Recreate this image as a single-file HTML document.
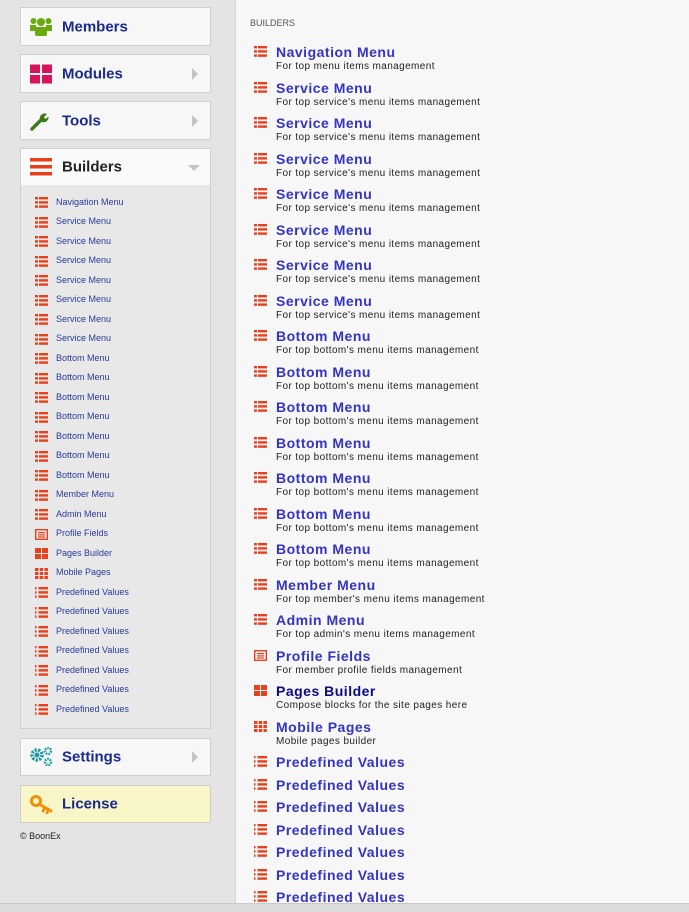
<!DOCTYPE html>
<html><head><meta charset="utf-8"><style>
*{margin:0;padding:0;box-sizing:border-box}
body{width:689px;height:912px;overflow:hidden;background:#e4e4e4;font-family:"Liberation Sans",Arial,sans-serif;position:relative}
.box{position:absolute;left:20px;width:191px;background:#f7f7f7;border:1px solid #cfcfcf}
.box .t{position:absolute;left:41px;top:50%;transform:translateY(-50%);font-size:15px;font-weight:bold;color:#1a2a8e}
.box .ic{position:absolute;left:9px;top:50%;transform:translateY(-50%)}
.arr{position:absolute;right:12px;top:50%;margin-top:-6px;width:0;height:0;border-left:6px solid #c4c4c4;border-top:6px solid transparent;border-bottom:6px solid transparent}
.sub{position:absolute;left:20px;top:185px;width:191px;height:544px;border:1px solid #cfcfcf;border-top:none;background:#e8e8e8}
.sl{position:absolute;left:35px;top:192.5px}
.sl div{height:19.5px;line-height:19.5px;font-size:9px;color:#2a3a9a;position:relative;padding-left:21px}
.sl svg{position:absolute;left:0;top:4.5px}
.main{position:absolute;left:235px;top:0;width:454px;height:903px;background:#f7f7f7;border-left:1px solid #d8d8d8}
.hd{position:absolute;left:250px;top:18px;font-size:9px;color:#555}
.rl{position:absolute;left:254px;top:44px}
.rl .r{height:35.5px;position:relative;padding-left:22px}
.rl .p{height:22.5px;position:relative;padding-left:22px}
.rl b{display:block;font-size:14px;line-height:16px;color:#3434c4;letter-spacing:0.5px}
.rl i{display:block;font-style:normal;font-size:10px;line-height:14px;color:#222;letter-spacing:0.4px}
.rl svg{position:absolute;left:0;top:2px}
.bar{position:absolute;left:0;top:903px;width:689px;height:9px;background:#dcdcdc;border-top:1px solid #c8c8c8}
</style></head><body>
<svg width="0" height="0" style="position:absolute"><defs>
<g id="L"><rect x="0" y="0" width="3" height="2.4" fill="#e8401c"/><rect x="4" y="0" width="9" height="2.4" fill="#e8401c"/><rect x="0" y="4.2" width="3" height="2.4" fill="#e8401c"/><rect x="4" y="4.2" width="9" height="2.4" fill="#e8401c"/><rect x="0" y="8.4" width="3" height="2.4" fill="#e8401c"/><rect x="4" y="8.4" width="9" height="2.4" fill="#e8401c"/></g>
<g id="F"><rect x="0.7" y="0.7" width="11.6" height="9.6" fill="none" stroke="#e8401c" stroke-width="1.4"/><rect x="3" y="3" width="7" height="1.2" fill="#e8401c"/><rect x="3" y="5.3" width="7" height="1.2" fill="#e8401c"/><rect x="3" y="7.4" width="7" height="1.2" fill="#e8401c"/></g>
<g id="P"><rect x="0" y="0" width="6" height="5" fill="#e8401c"/><rect x="7" y="0" width="6" height="5" fill="#e8401c"/><rect x="0" y="6" width="6" height="5" fill="#e8401c"/><rect x="7" y="6" width="6" height="5" fill="#e8401c"/></g>
<g id="M"><rect x="0" y="0" width="3.5" height="3" fill="#e8401c"/><rect x="4.7" y="0" width="3.5" height="3" fill="#e8401c"/><rect x="9.4" y="0" width="3.5" height="3" fill="#e8401c"/><rect x="0" y="4" width="3.5" height="3" fill="#e8401c"/><rect x="4.7" y="4" width="3.5" height="3" fill="#e8401c"/><rect x="9.4" y="4" width="3.5" height="3" fill="#e8401c"/><rect x="0" y="8" width="3.5" height="3" fill="#e8401c"/><rect x="4.7" y="8" width="3.5" height="3" fill="#e8401c"/><rect x="9.4" y="8" width="3.5" height="3" fill="#e8401c"/></g>
<g id="V"><rect x="0" y="0" width="1.5" height="2.4" fill="#e8401c"/><rect x="0" y="4.2" width="1.5" height="2.4" fill="#e8401c"/><rect x="0" y="8.4" width="1.5" height="2.4" fill="#e8401c"/><rect x="3.5" y="0" width="9.5" height="2.4" fill="#e8401c"/><rect x="3.5" y="4.2" width="9.5" height="2.4" fill="#e8401c"/><rect x="3.5" y="8.4" width="9.5" height="2.4" fill="#e8401c"/></g>
</defs></svg>

<div class="box" style="top:7px;height:39px"><svg class="ic" width="22" height="20" viewBox="0 0 22 20"><circle cx="3.5" cy="4" r="3" fill="#6aaa10"/><circle cx="18.5" cy="4" r="3" fill="#6aaa10"/><circle cx="11" cy="5" r="4" fill="#6aaa10"/><rect x="0" y="8" width="6" height="6" fill="#6aaa10"/><rect x="16" y="8" width="6" height="6" fill="#6aaa10"/><rect x="5" y="10" width="12" height="9" rx="2" fill="#6aaa10"/></svg><span class="t">Members</span></div>
<div class="box" style="top:54px;height:39px"><svg class="ic" width="22" height="19" viewBox="0 0 22 19"><rect x="0" y="0" width="10" height="8.5" fill="#d8145a"/><rect x="12" y="0" width="10" height="8.5" fill="#d8145a"/><rect x="0" y="10.5" width="10" height="8.5" fill="#d8145a"/><rect x="12" y="10.5" width="10" height="8.5" fill="#d8145a"/></svg><span class="t">Modules</span><span class="arr"></span></div>
<div class="box" style="top:101px;height:39px"><svg class="ic" width="20" height="20" viewBox="0 0 20 20"><path d="M2 18 L11 9" stroke="#3f7a16" stroke-width="3.5" stroke-linecap="round"/><path d="M10 9 A5 5 0 0 1 17 3 L14 6 L15.5 8 L18.5 5.5 A5 5 0 0 1 12 11 Z" fill="#3f7a16"/></svg><span class="t">Tools</span><span class="arr"></span></div>
<div class="box" style="top:148px;height:38px;background:#fafafa"><svg class="ic" width="22" height="18" viewBox="0 0 22 18"><rect y="0" width="22" height="3.5" fill="#e8401c"/><rect y="7" width="22" height="3.5" fill="#e8401c"/><rect y="14" width="22" height="3.5" fill="#e8401c"/></svg><span class="t" style="color:#222">Builders</span><span style="position:absolute;right:10px;top:16px;border-top:6px solid #c4c4c4;border-left:6px solid transparent;border-right:6px solid transparent"></span></div>
<div class="sub"></div>
<div class="sl">
<div><svg width="13" height="11"><use href="#L"/></svg>Navigation Menu</div>
<div><svg width="13" height="11"><use href="#L"/></svg>Service Menu</div>
<div><svg width="13" height="11"><use href="#L"/></svg>Service Menu</div>
<div><svg width="13" height="11"><use href="#L"/></svg>Service Menu</div>
<div><svg width="13" height="11"><use href="#L"/></svg>Service Menu</div>
<div><svg width="13" height="11"><use href="#L"/></svg>Service Menu</div>
<div><svg width="13" height="11"><use href="#L"/></svg>Service Menu</div>
<div><svg width="13" height="11"><use href="#L"/></svg>Service Menu</div>
<div><svg width="13" height="11"><use href="#L"/></svg>Bottom Menu</div>
<div><svg width="13" height="11"><use href="#L"/></svg>Bottom Menu</div>
<div><svg width="13" height="11"><use href="#L"/></svg>Bottom Menu</div>
<div><svg width="13" height="11"><use href="#L"/></svg>Bottom Menu</div>
<div><svg width="13" height="11"><use href="#L"/></svg>Bottom Menu</div>
<div><svg width="13" height="11"><use href="#L"/></svg>Bottom Menu</div>
<div><svg width="13" height="11"><use href="#L"/></svg>Bottom Menu</div>
<div><svg width="13" height="11"><use href="#L"/></svg>Member Menu</div>
<div><svg width="13" height="11"><use href="#L"/></svg>Admin Menu</div>
<div><svg width="13" height="11"><use href="#F"/></svg>Profile Fields</div>
<div><svg width="13" height="11"><use href="#P"/></svg>Pages Builder</div>
<div><svg width="13" height="11"><use href="#M"/></svg>Mobile Pages</div>
<div><svg width="13" height="11"><use href="#V"/></svg>Predefined Values</div>
<div><svg width="13" height="11"><use href="#V"/></svg>Predefined Values</div>
<div><svg width="13" height="11"><use href="#V"/></svg>Predefined Values</div>
<div><svg width="13" height="11"><use href="#V"/></svg>Predefined Values</div>
<div><svg width="13" height="11"><use href="#V"/></svg>Predefined Values</div>
<div><svg width="13" height="11"><use href="#V"/></svg>Predefined Values</div>
<div><svg width="13" height="11"><use href="#V"/></svg>Predefined Values</div>
</div>
<div class="box" style="top:738px;height:38px"><svg class="ic" width="24" height="20" viewBox="0 0 24 20"><circle cx="7" cy="8" r="5" fill="none" stroke="#1a9aa0" stroke-width="3.5" stroke-dasharray="2.2 1.3"/><circle cx="7" cy="8" r="2.5" fill="#1a9aa0"/><circle cx="18" cy="4" r="3" fill="none" stroke="#1a9aa0" stroke-width="2.5" stroke-dasharray="1.6 1"/><circle cx="18" cy="15" r="3" fill="none" stroke="#1a9aa0" stroke-width="2.5" stroke-dasharray="1.6 1"/></svg><span class="t">Settings</span><span class="arr"></span></div>
<div class="box" style="top:785px;height:38px;background:#f8f6c6"><svg class="ic" width="24" height="20" viewBox="0 0 24 20"><circle cx="6" cy="7" r="4.5" fill="none" stroke="#f0900a" stroke-width="3"/><path d="M9 10 L21 17 M15 13.5 L13 17 M18.5 15.5 L17 19" stroke="#f0900a" stroke-width="2.8" stroke-linecap="round"/></svg><span class="t">License</span></div>
<div style="position:absolute;left:20px;top:831px;font-size:9px;color:#222">© BoonEx</div>

<div class="main"></div>
<div class="hd">BUILDERS</div>
<div class="rl">
<div class="r"><svg width="13" height="11"><use href="#L"/></svg><b>Navigation Menu</b><i>For top menu items management</i></div>
<div class="r"><svg width="13" height="11"><use href="#L"/></svg><b>Service Menu</b><i>For top service's menu items management</i></div>
<div class="r"><svg width="13" height="11"><use href="#L"/></svg><b>Service Menu</b><i>For top service's menu items management</i></div>
<div class="r"><svg width="13" height="11"><use href="#L"/></svg><b>Service Menu</b><i>For top service's menu items management</i></div>
<div class="r"><svg width="13" height="11"><use href="#L"/></svg><b>Service Menu</b><i>For top service's menu items management</i></div>
<div class="r"><svg width="13" height="11"><use href="#L"/></svg><b>Service Menu</b><i>For top service's menu items management</i></div>
<div class="r"><svg width="13" height="11"><use href="#L"/></svg><b>Service Menu</b><i>For top service's menu items management</i></div>
<div class="r"><svg width="13" height="11"><use href="#L"/></svg><b>Service Menu</b><i>For top service's menu items management</i></div>
<div class="r"><svg width="13" height="11"><use href="#L"/></svg><b>Bottom Menu</b><i>For top bottom's menu items management</i></div>
<div class="r"><svg width="13" height="11"><use href="#L"/></svg><b>Bottom Menu</b><i>For top bottom's menu items management</i></div>
<div class="r"><svg width="13" height="11"><use href="#L"/></svg><b>Bottom Menu</b><i>For top bottom's menu items management</i></div>
<div class="r"><svg width="13" height="11"><use href="#L"/></svg><b>Bottom Menu</b><i>For top bottom's menu items management</i></div>
<div class="r"><svg width="13" height="11"><use href="#L"/></svg><b>Bottom Menu</b><i>For top bottom's menu items management</i></div>
<div class="r"><svg width="13" height="11"><use href="#L"/></svg><b>Bottom Menu</b><i>For top bottom's menu items management</i></div>
<div class="r"><svg width="13" height="11"><use href="#L"/></svg><b>Bottom Menu</b><i>For top bottom's menu items management</i></div>
<div class="r"><svg width="13" height="11"><use href="#L"/></svg><b>Member Menu</b><i>For top member's menu items management</i></div>
<div class="r"><svg width="13" height="11"><use href="#L"/></svg><b>Admin Menu</b><i>For top admin's menu items management</i></div>
<div class="r"><svg width="13" height="11"><use href="#F"/></svg><b>Profile Fields</b><i>For member profile fields management</i></div>
<div class="r"><svg width="13" height="11"><use href="#P"/></svg><b style="color:#0a0a80">Pages Builder</b><i>Compose blocks for the site pages here</i></div>
<div class="r"><svg width="13" height="11"><use href="#M"/></svg><b>Mobile Pages</b><i>Mobile pages builder</i></div>
<div class="p"><svg width="13" height="11"><use href="#V"/></svg><b>Predefined Values</b></div>
<div class="p"><svg width="13" height="11"><use href="#V"/></svg><b>Predefined Values</b></div>
<div class="p"><svg width="13" height="11"><use href="#V"/></svg><b>Predefined Values</b></div>
<div class="p"><svg width="13" height="11"><use href="#V"/></svg><b>Predefined Values</b></div>
<div class="p"><svg width="13" height="11"><use href="#V"/></svg><b>Predefined Values</b></div>
<div class="p"><svg width="13" height="11"><use href="#V"/></svg><b>Predefined Values</b></div>
<div class="p"><svg width="13" height="11"><use href="#V"/></svg><b>Predefined Values</b></div>
</div>
<div class="bar"></div>
</body></html>
